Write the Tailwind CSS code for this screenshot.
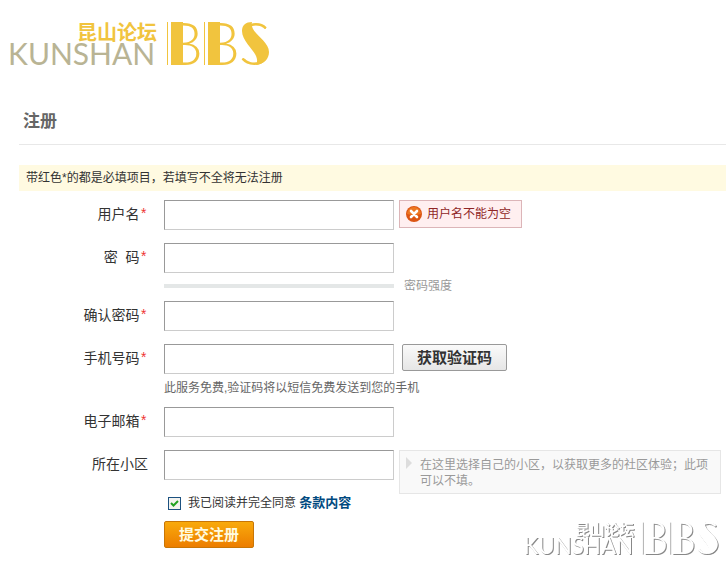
<!DOCTYPE html>
<html lang="zh-CN">
<head>
<meta charset="utf-8">
<meta name="viewport" content="width=device-width, initial-scale=1">
<title>注册 - 昆山论坛</title>
<script src="https://cdn.jsdelivr.net/npm/@tailwindcss/browser@4"></script>
</head>
<body class="bg-white font-['Liberation_Sans','Noto_Sans_CJK_SC',sans-serif] text-xs text-[#333]">
<svg class="hidden">
  <symbol id="logo" viewBox="0 0 262 48">
    <text class="font-['Noto_Sans_CJK_SC',sans-serif] text-[20px] font-bold" x="67" y="20" fill="var(--accent)">昆山论坛</text>
    <text class="font-['Lato',sans-serif] text-[30px]" x="-2" y="45" fill="var(--name)">KUNSHAN</text>
    <g fill="var(--accent)">
      <text class="font-['Lato',sans-serif] text-[60px] font-light" x="155 192 229" y="45">BBS</text>
      <rect x="157" y="2" width="1" height="43"/>
      <rect x="161" y="2" width="12" height="43"/>
      <rect x="194" y="2" width="1" height="43"/>
      <rect x="198" y="2" width="12" height="43"/>
      <path d="M232 11C232 5 236 2 242 2C239 13 259 20 259 32C259 39 254 44 246 45C252 34 232 24 232 11Z"/>
    </g>
  </symbol>
</svg>
<div class="relative min-h-[564px]">
  <header class="px-[10px] pt-5">
    <a href="#" aria-label="昆山论坛 KUNSHAN BBS" class="block w-[262px]">
      <svg class="h-12 w-full [--accent:#f1c43e] [--name:#b9b494]"><use href="#logo"/></svg>
    </a>
  </header>
  <main class="pl-[19px] pt-10">
    <h1 class="border-b border-[#e8e8e8] px-1 pb-2 text-[17px] leading-7 font-bold text-[#666]">注册</h1>
    <p class="mt-5 bg-[#fffae1] px-[7px] py-1 leading-[18px]">带红色*的都是必填项目，若填写不全将无法注册</p>

    <form class="mt-[9px] grid grid-cols-[129px_minmax(0,1fr)] gap-x-4 gap-y-[13px]">
      <label for="user" class="text-right text-sm leading-7">用户名<span class="font-['Liberation_Mono',monospace] text-[#e33]">*</span></label>
      <div class="flex items-start gap-[5px]">
        <input id="user" type="text" class="h-[30px] w-[230px] border border-t-[#999] border-r-[#ccc] border-b-[#ccc] border-l-[#999] px-2">
        <p role="alert" class="flex h-7 items-center gap-[5px] border border-[#dcb5b8] bg-[#ffeff0] pl-1.5 pr-2.5 text-[#8f2626]">
          <svg class="size-4" viewBox="0 0 16 16"><circle cx="8" cy="8" r="8" fill="#dc5513"/><path d="M1 8a7 7 0 0 1 14 0Q8 10 1 8Z" fill="#ee7722"/><path d="M5 5l6 6M11 5l-6 6" stroke="#fff" stroke-width="2.6" stroke-linecap="round"/></svg>
          用户名不能为空
        </p>
      </div>

      <label for="pass" class="text-right text-sm leading-7">密&nbsp; 码<span class="font-['Liberation_Mono',monospace] text-[#e33]">*</span></label>
      <div>
        <input id="pass" type="password" class="block h-[30px] w-[230px] border border-t-[#999] border-r-[#ccc] border-b-[#ccc] border-l-[#999] px-2">
        <div class="mt-1 flex h-[11px] items-center gap-2.5 pt-1.5">
          <span class="h-1 w-[230px] bg-[#e4e7e7]"></span>
          <span class="leading-4 text-[#999]">密码强度</span>
        </div>
      </div>

      <label for="confirm" class="text-right text-sm leading-7">确认密码<span class="font-['Liberation_Mono',monospace] text-[#e33]">*</span></label>
      <div>
        <input id="confirm" type="password" class="block h-[30px] w-[230px] border border-t-[#999] border-r-[#ccc] border-b-[#ccc] border-l-[#999] px-2">
      </div>

      <label for="phone" class="text-right text-sm leading-7">手机号码<span class="font-['Liberation_Mono',monospace] text-[#e33]">*</span></label>
      <div>
        <div class="flex items-start gap-2">
          <input id="phone" type="tel" class="h-[30px] w-[230px] border border-t-[#999] border-r-[#ccc] border-b-[#ccc] border-l-[#999] px-2">
          <button type="button" class="h-[27px] w-[105px] rounded-xs border border-[#999] bg-linear-to-b from-[#fafafa] to-[#e6e6e6] text-[15px] leading-6 font-bold whitespace-nowrap text-[#333]">获取验证码</button>
        </div>
        <p class="pt-2 leading-3 text-[#666]">此服务免费,验证码将以短信免费发送到您的手机</p>
      </div>

      <label for="email" class="text-right text-sm leading-7">电子邮箱<span class="font-['Liberation_Mono',monospace] text-[#e33]">*</span></label>
      <div>
        <input id="email" type="email" class="block h-[30px] w-[230px] border border-t-[#999] border-r-[#ccc] border-b-[#ccc] border-l-[#999] px-2">
      </div>

      <label for="area" class="text-right text-sm leading-7">所在小区</label>
      <div class="flex items-start gap-[5px] pr-[5px]">
        <input id="area" type="text" class="h-[30px] w-[230px] shrink-0 border border-t-[#999] border-r-[#ccc] border-b-[#ccc] border-l-[#999] px-2">
        <p class="flex items-start gap-2 border border-[#e6e6e6] bg-[#f9f9f9] pt-1.5 pr-2.5 pb-1 pl-1.5 leading-4 text-[#999]">
          <svg class="h-3 w-[6px] shrink-0" viewBox="0 0 6 12"><path d="M0 0l6 6-6 6z" fill="#ddd"/></svg>
          <span>在这里选择自己的小区，以获取更多的社区体验；此项可以不填。</span>
        </p>
      </div>

      <div class="col-start-2 -mt-3.5 flex flex-col items-start gap-2">
        <div class="flex items-center gap-[7px] pl-1 leading-5">
          <input id="agree" type="checkbox" checked class="size-[13px] appearance-none border border-[#1c5180] bg-[#f3f3ef] checked:bg-[url('data:image/svg+xml,%3Csvg%20xmlns=%22http://www.w3.org/2000/svg%22%20viewBox=%220%200%2011%2011%22%3E%3Cpath%20d=%22M2%205l2.5%202.5L9%203%22%20fill=%22none%22%20stroke=%22%2321a121%22%20stroke-width=%222%22/%3E%3C/svg%3E')]">
          <span><label for="agree">我已阅读并完全同意</label> <a href="#" class="text-[13px] font-bold text-[#004a80]">条款内容</a></span>
        </div>
        <button type="submit" class="h-[27px] w-[90px] rounded-xs border border-[#c87606] bg-linear-to-b from-[#f9aa0c] to-[#ec7d00] text-[15px] leading-6 font-bold text-[#fffbe0]">提交注册</button>
      </div>
    </form>
  </main>
  <svg role="img" aria-label="昆山论坛 KUNSHAN BBS" class="pointer-events-none absolute right-[6px] bottom-2 h-9 w-[195px] drop-shadow-[1px_1px_0px_#888] [--accent:#fff] [--name:#fff]"><use href="#logo"/></svg>
</div>
</body>
</html>
